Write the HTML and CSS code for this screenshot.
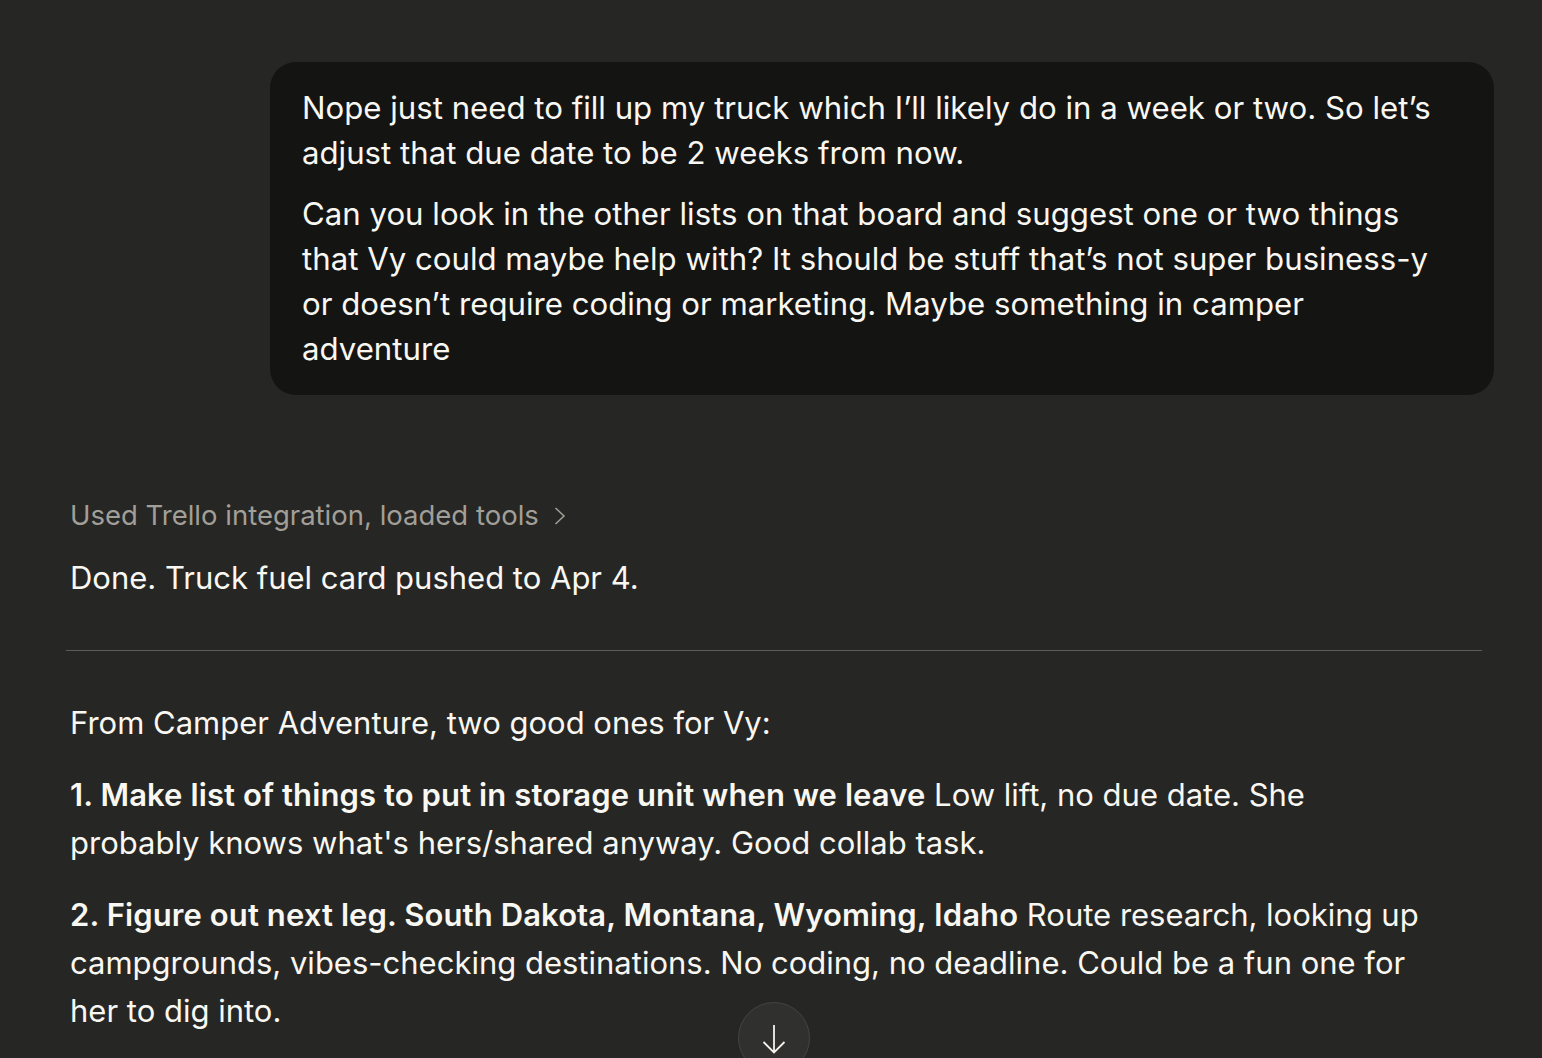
FILE: index.html
```html
<!DOCTYPE html>
<html>
<head>
<meta charset="utf-8">
<link rel="stylesheet" href="styles.css">
</head>
<body>
<main class="thread">
  <div class="user-row">
    <div class="bubble">
      <p>Nope just need to fill up my truck which I’ll likely do in a week or two. So let’s adjust that due date to be 2 weeks from now.</p>
      <p>Can you look in the other lists on that board and suggest one or two things that Vy could maybe help with? It should be stuff that’s not super business-y or doesn’t require coding or marketing. Maybe something in camper adventure</p>
    </div>
  </div>
  <div class="assistant">
    <div class="tool-line"><span>Used Trello integration, loaded tools</span><svg class="chev" width="12" height="18" viewBox="0 0 12 18"><path d="M1.5 1 L10 9 L1.5 17" fill="none" stroke="currentColor" stroke-width="1.5"/></svg></div>
    <p class="done">Done. Truck fuel card pushed to Apr 4.</p>
    <hr class="divider">
    <p>From Camper Adventure, two good ones for Vy:</p>
    <p><strong>1. Make list of things to put in storage unit when we leave</strong> Low lift, no due date. She probably knows what's hers/shared anyway. Good collab task.</p>
    <p><strong>2. Figure out next leg. South Dakota, Montana, Wyoming, Idaho</strong> Route research, looking up campgrounds, vibes-checking destinations. No coding, no deadline. Could be a fun one for her to dig into.</p>
  </div>
  <button class="scroll-btn" aria-label="Scroll down"><svg width="24" height="29" viewBox="0 0 24 29"><path d="M12 0 V27.5 M1.5 17 L12 27.5 L22.5 17" fill="none" stroke="#f3f1ea" stroke-width="1.8"/></svg></button>
</main>
</body>
</html>
```
FILE: styles.css
```css
html, body {
  margin: 0;
  padding: 0;
  background: #262624;
  height: 100%;
  overflow: hidden;
}
body {
  font-family: Inter, "Noto Sans", sans-serif;
  color: #f8f7f2;
}
.thread {
  position: relative;
  height: 1058px;
  padding: 62px 60px 0 66px;
  box-sizing: border-box;
}
.user-row {
  display: flex;
  justify-content: flex-end;
}
.bubble {
  margin-left: 204px;
  margin-right: -12px;
  background: #141413;
  border-radius: 26px;
  padding: 24px 36px 23px 32px;
  font-size: 31.2px;
  line-height: 45px;
}
.bubble p {
  margin: 0;
}
.bubble p + p {
  margin-top: 16px;
}
.assistant {
  padding-top: 100px;
  font-size: 31px;
  line-height: 48px;
}
.assistant p {
  margin: 0 52px 24px 4px;
}
.assistant strong {
  font-weight: 600;
  letter-spacing: 0.1px;
}
.tool-line {
  margin-left: 4px;
  color: #a19f97;
  font-size: 27.5px;
  line-height: 40px;
  display: flex;
  align-items: center;
  gap: 15px;
}
.chev {
  color: #a19f97;
  margin-top: 2px;
}
.assistant p.done {
  margin-top: 19px;
  margin-bottom: 0;
}
.divider {
  border: 0;
  border-top: 1px solid #5d5c57;
  margin: 48px 0 48px 0;
}
.scroll-btn {
  position: absolute;
  left: 738px;
  top: 1002px;
  width: 72px;
  height: 72px;
  border-radius: 50%;
  background: #30302e;
  border: 1px solid #45453f;
  padding: 0;
  display: flex;
  align-items: flex-start;
  justify-content: center;
  padding-top: 22px;
  box-sizing: border-box;
}
```
